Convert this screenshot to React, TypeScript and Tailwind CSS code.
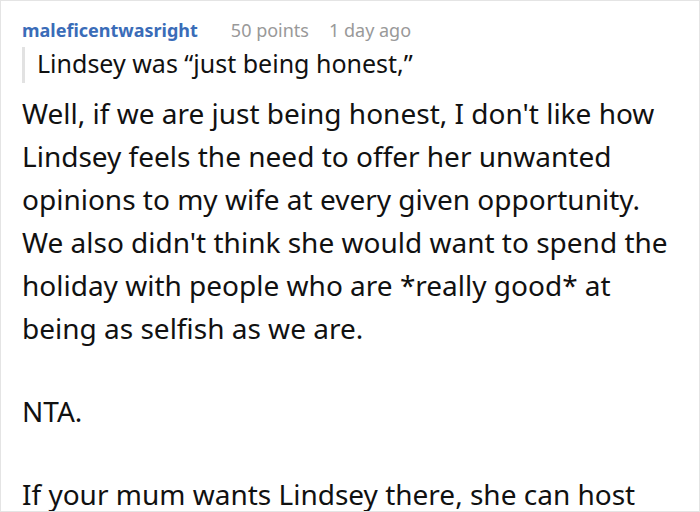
import React from 'react';

const paragraphs = [
    "Well, if we are just being honest, I don't like how Lindsey feels the need to offer her unwanted opinions to my wife at every given opportunity. We also didn't think she would want to spend the holiday with people who are *really good* at being as selfish as we are.",
    'NTA.',
    'If your mum wants Lindsey there, she can host',
];

const App: React.FC = () => {
    return (
        <div
            className="w-[700px] h-[512px] overflow-hidden bg-white border border-[#e4e4e4] box-border"
            style={{ fontFamily: '"Noto Sans", "Open Sans", sans-serif' }}
        >
            <div className="pl-[21px] pr-4 pt-[15px]">
                {/* Comment header */}
                <div className="flex items-baseline text-[18px] leading-[28px]">
                    <span className="font-bold text-[#3a6cb8]">maleficentwasright</span>
                    <span className="ml-[33px] text-[#999999]">50 points</span>
                    <span className="ml-[20px] text-[#999999]">1 day ago</span>
                </div>

                {/* Quoted text */}
                <div className="mt-[3px] h-[36px] border-l-[3px] border-[#e2e2e2] pl-[12px] text-[25px] leading-[33px] text-[#111]">
                    Lindsey was “just being honest,”
                </div>

                {/* Comment body */}
                <div className="mt-[9px] text-[28px] leading-[43px] text-[#111] flex flex-col gap-[40px]">
                    {paragraphs.map((p, i) => (
                        <p key={i}>{p}</p>
                    ))}
                </div>
            </div>
        </div>
    );
};

export default App;
